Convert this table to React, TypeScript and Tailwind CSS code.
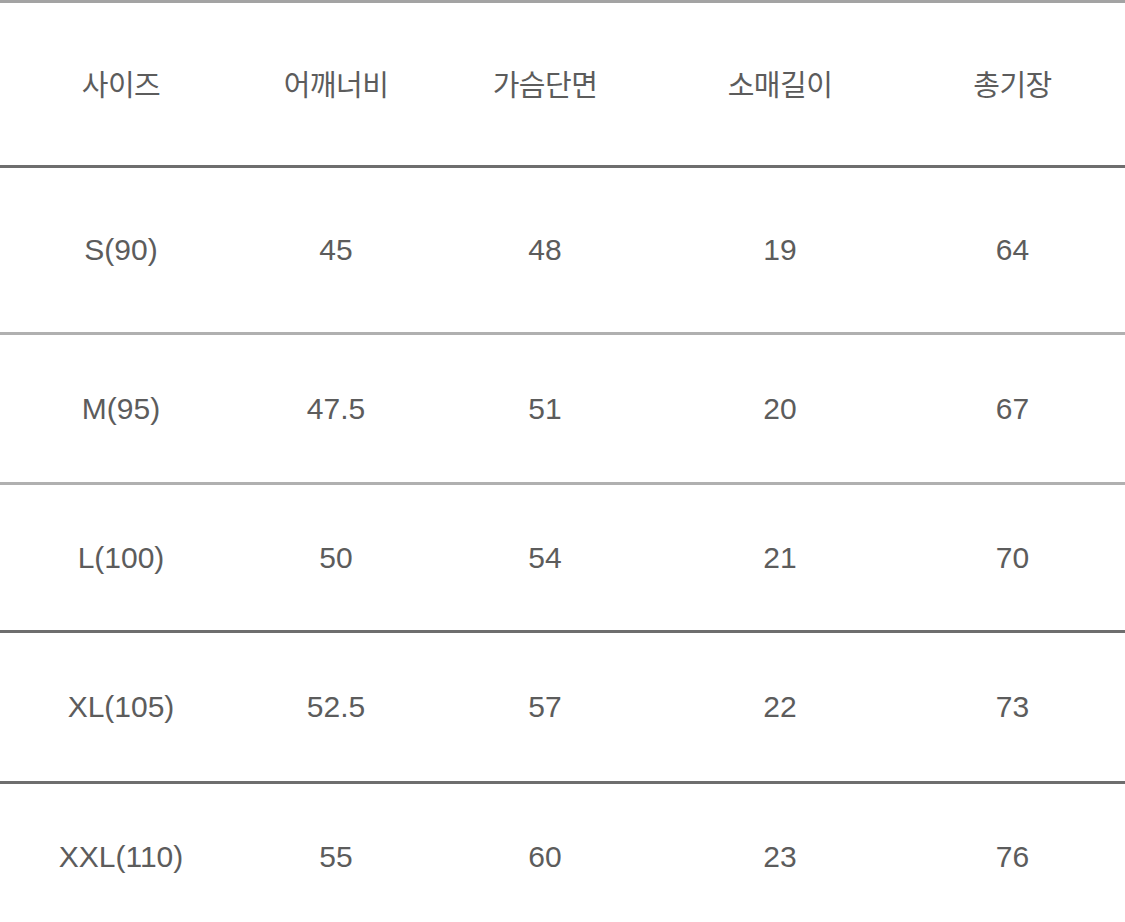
import React from "react";

const header = ["사이즈", "어깨너비", "가슴단면", "소매길이", "총기장"];
const rows: { cells: string[]; h: string; border: string }[] = [
  { cells: ["S(90)", "45", "48", "19", "64"], h: "h-[167px]", border: "border-b-[3px] border-[#b0b0b0]" },
  { cells: ["M(95)", "47.5", "51", "20", "67"], h: "h-[150px]", border: "border-b-[3px] border-[#b0b0b0]" },
  { cells: ["L(100)", "50", "54", "21", "70"], h: "h-[148px]", border: "border-b-[3px] border-[#6e6e6e]" },
  { cells: ["XL(105)", "52.5", "57", "22", "73"], h: "h-[151px]", border: "border-b-[3px] border-[#6e6e6e]" },
  { cells: ["XXL(110)", "55", "60", "23", "76"], h: "h-[146px]", border: "" },
];

const cols = "grid grid-cols-[242px_188px_230px_240px_225px]";

export default function App() {
  return (
    <div
      className="w-[1125px] h-[922px] overflow-hidden bg-white text-[#5c5c5c]"
      style={{ fontFamily: '"Liberation Sans", Arial, "Noto Sans CJK KR", sans-serif' }}
    >
      <div className="border-t-[3px] border-[#a3a3a3]">
        <div className={`${cols} h-[165px] items-center border-b-[3px] border-[#6e6e6e]`}>
          {header.map((h) => (
            <div
              key={h}
              className="text-center text-[29px] tracking-[-0.5px]"
              style={{ fontFamily: '"Noto Sans CJK KR", sans-serif' }}
            >
              {h}
            </div>
          ))}
        </div>
        {rows.map((r, i) => (
          <div key={i} className={`${cols} ${r.h} items-center ${r.border}`}>
            {r.cells.map((c, j) => (
              <div key={j} className="text-center text-[30px] leading-none">
                {c}
              </div>
            ))}
          </div>
        ))}
      </div>
    </div>
  );
}
